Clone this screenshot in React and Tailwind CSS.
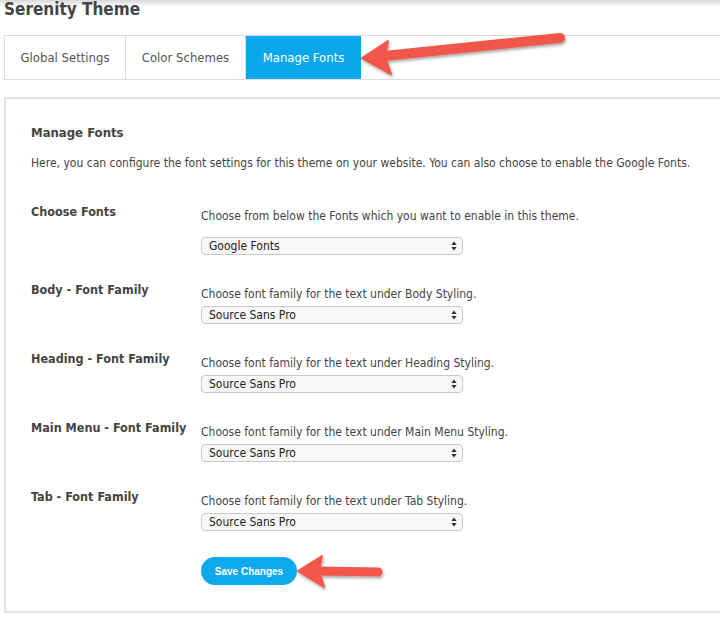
import React from "react";

function SelectBox({ value }) {
  return (
    <div className="flex h-[18px] w-[262px] items-center justify-between rounded-[4px] border border-[#c9c9c9] bg-[#f7f7f7] pl-[7px] pr-[5px] text-[12px] leading-[16px] text-[#222]">
      <span>{value}</span>
      <svg width="6" height="10" viewBox="0 0 6 10">
        <path d="M3 0.5 L5.7 4 L0.3 4 Z" fill="#333" />
        <path d="M3 9.5 L5.7 6 L0.3 6 Z" fill="#333" />
      </svg>
    </div>
  );
}

function Row({ label, desc, value, first }) {
  return (
    <div className="grid grid-cols-[170px_1fr]">
      <div className="text-[12.5px] font-bold leading-[16px] text-[#444]">{label}</div>
      <div className="pt-[4px]">
        <div className="text-[12px] leading-[16px] text-[#444]">{desc}</div>
        <div className={first ? "mt-[13px]" : "mt-[4px]"}>
          <SelectBox value={value} />
        </div>
      </div>
    </div>
  );
}

export default function App() {
  return (
    <div className="relative h-[621px] w-[720px] overflow-hidden bg-[linear-gradient(to_bottom,#d8d8d8,#ffffff_7px)] font-['DejaVu_Sans_Condensed','DejaVu_Sans',sans-serif] text-[#444]">
      <h1 className="pl-[4px] text-[17px] font-bold leading-[18px] text-[#444]">
        Serenity Theme
      </h1>

      <div className="ml-[4px] mt-[17px] flex h-[45px] border border-r-0 border-[#dcdcdc]">
        <div className="flex w-[121px] items-center justify-center border-r border-[#dcdcdc] text-[13px] text-[#555]">
          Global Settings
        </div>
        <div className="flex w-[120px] items-center justify-center border-r border-[#dcdcdc] text-[13px] text-[#555]">
          Color Schemes
        </div>
        <div className="flex w-[115px] items-center justify-center bg-[#0ba6ec] text-[13px] text-white">
          Manage Fonts
        </div>
      </div>

      <div className="ml-[4px] mt-[17px] h-[516px] border-2 border-r-0 border-[#e3e3e3] pl-[25px] pt-[26px]">
        <div className="text-[13px] font-bold leading-[16px] text-[#444]">Manage Fonts</div>
        <p className="mt-[14px] text-[12px] leading-[16px] text-[#444]">
          Here, you can configure the font settings for this theme on your website. You can also choose to enable the Google Fonts.
        </p>

        <div className="mt-[33px] flex flex-col gap-[27px]">
          <Row
            first
            label="Choose Fonts"
            desc="Choose from below the Fonts which you want to enable in this theme."
            value="Google Fonts"
          />
          <Row
            label="Body - Font Family"
            desc="Choose font family for the text under Body Styling."
            value="Source Sans Pro"
          />
          <Row
            label="Heading - Font Family"
            desc="Choose font family for the text under Heading Styling."
            value="Source Sans Pro"
          />
          <Row
            label="Main Menu - Font Family"
            desc="Choose font family for the text under Main Menu Styling."
            value="Source Sans Pro"
          />
          <Row
            label="Tab - Font Family"
            desc="Choose font family for the text under Tab Styling."
            value="Source Sans Pro"
          />
        </div>

        <div className="mt-[26px] pl-[170px]">
          <button className="flex h-[28px] w-[96px] items-center justify-center rounded-full bg-[#0ea8ec] font-['Liberation_Sans',Arial,sans-serif] text-[10px] font-bold text-white">
            Save Changes
          </button>
        </div>
      </div>

      <svg
        className="pointer-events-none absolute left-0 top-0"
        width="720"
        height="621"
        viewBox="0 0 720 621"
      >
        <defs>
          <filter id="sh" x="-20%" y="-40%" width="140%" height="180%">
            <feDropShadow dx="1" dy="2" stdDeviation="1.6" floodColor="#000" floodOpacity="0.35" />
          </filter>
        </defs>
        <g filter="url(#sh)" fill="#f0574a" stroke="#f0574a">
          <line x1="560" y1="38" x2="384" y2="56" strokeWidth="10" strokeLinecap="round" />
          <path d="M362 58 L388 41 L385 57 L391 74 Z" strokeWidth="2" strokeLinejoin="round" />
        </g>
        <g filter="url(#sh)" fill="#f0574a" stroke="#f0574a">
          <line x1="378" y1="572" x2="318" y2="571" strokeWidth="9" strokeLinecap="round" />
          <path d="M298 571 L322 556 L319 571 L324 587 Z" strokeWidth="2" strokeLinejoin="round" />
        </g>
      </svg>
    </div>
  );
}
